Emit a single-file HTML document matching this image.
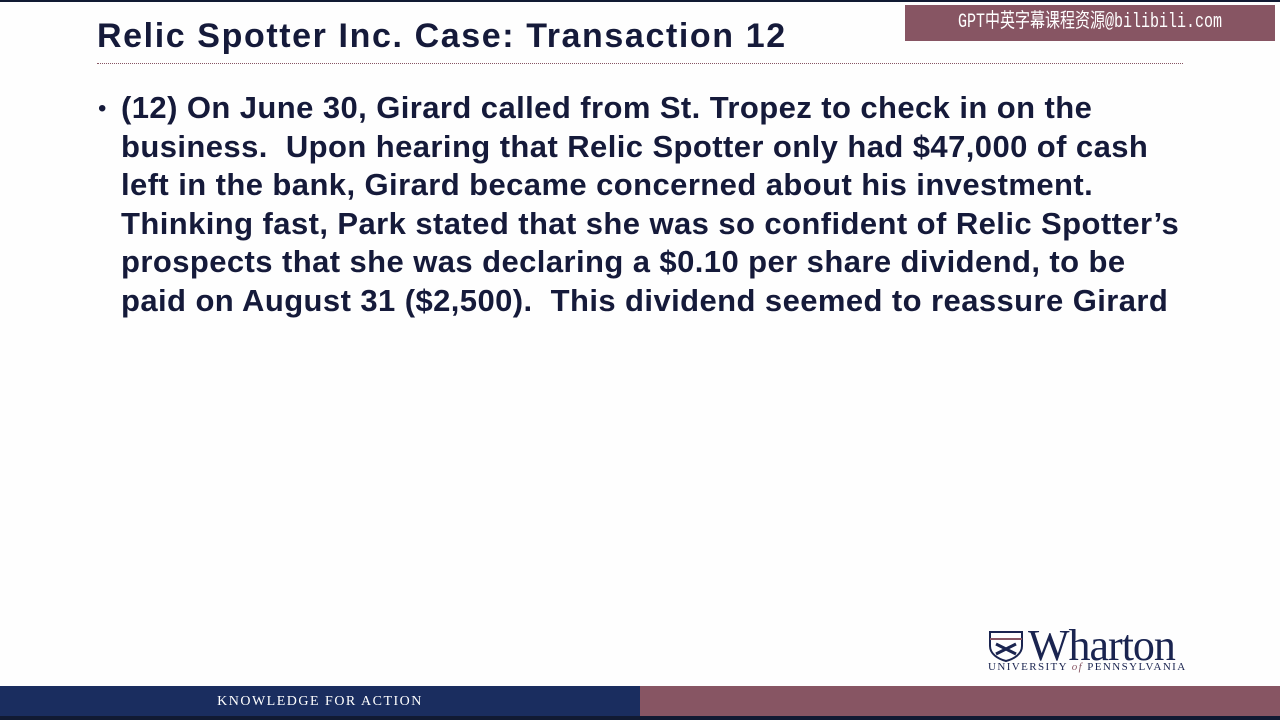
<!DOCTYPE html>
<html><head><style>
body{margin:0;width:1280px;height:720px;background:#fefefe;position:relative;overflow:hidden;font-family:"Liberation Sans",Arial,sans-serif}
.top{position:absolute;left:0;top:0;width:1280px;height:2px;background:#111a33}
.wm{position:absolute;left:905px;top:5px;width:370px;height:36px;background:#875563;color:#fff;font:20px "Liberation Mono","Noto Sans CJK SC",monospace;line-height:36px;text-align:center;white-space:nowrap;overflow:hidden}
.wm span{display:inline-block;transform:scaleX(0.75);margin:0 -60px}
h1{position:absolute;left:97px;top:17px;margin:0;font-size:34px;font-weight:bold;color:#151a3a;letter-spacing:1.6px;white-space:nowrap}
.rule{position:absolute;left:97px;top:63px;width:1086px;border-top:1px dotted #875563}
.body{position:absolute;left:121px;top:89px;font-size:31px;font-weight:bold;color:#151a3a;line-height:38.5px;letter-spacing:0.42px;white-space:nowrap}
.bul{position:absolute;left:98px;top:90px;font-size:24px;line-height:38.5px;color:#151a3a}
.logo{position:absolute;left:988px;top:628px}
.bar{position:absolute;left:0;top:686px;width:640px;height:30px;background:#1a2d5f;color:#fff;font:14px "Liberation Serif",serif;letter-spacing:1.5px;text-align:center;line-height:32px}
.bar2{position:absolute;left:640px;top:686px;width:640px;height:30px;background:#875563}
.bot{position:absolute;left:0;top:716px;width:1280px;height:4px;background:#111a33}
</style></head><body>
<div class="top"></div>
<div class="wm"><span>GPT中英字幕课程资源@bilibili.com</span></div>
<h1>Relic Spotter Inc. Case: Transaction 12</h1>
<div class="rule"></div>
<div class="bul">•</div>
<div class="body">(12) On June 30, Girard called from St. Tropez to check in on the<br>business.&nbsp; Upon hearing that Relic Spotter only had $47,000 of cash<br>left in the bank, Girard became concerned about his investment.<br>Thinking fast, Park stated that she was so confident of Relic Spotter’s<br>prospects that she was declaring a $0.10 per share dividend, to be<br>paid on August 31 ($2,500).&nbsp; This dividend seemed to reassure Girard</div>
<div class="logo">
<svg width="36" height="32" viewBox="0 0 36 32" style="position:absolute;left:0;top:2px"><path d="M2 2H34V16C34 24 26 29 18 31C10 29 2 24 2 16Z" fill="none" stroke="#1a2450" stroke-width="2"/><path d="M2 9H34" stroke="#875563" stroke-width="2"/><path d="M8 14L28 24M28 14L8 24" stroke="#1a2450" stroke-width="3"/></svg>
<div style="position:absolute;left:40px;top:-8px;font:44px 'Liberation Serif',serif;color:#1a2450;letter-spacing:-1px">Wharton</div>
<div style="position:absolute;left:0;top:33px;font:11px 'Liberation Serif',serif;color:#1a2450;white-space:nowrap;letter-spacing:1.4px">UNIVERSITY <i style="color:#875563">of</i> PENNSYLVANIA</div>
</div>
<div class="bar">KNOWLEDGE FOR ACTION</div>
<div class="bar2"></div>
<div class="bot"></div>
</body></html>
